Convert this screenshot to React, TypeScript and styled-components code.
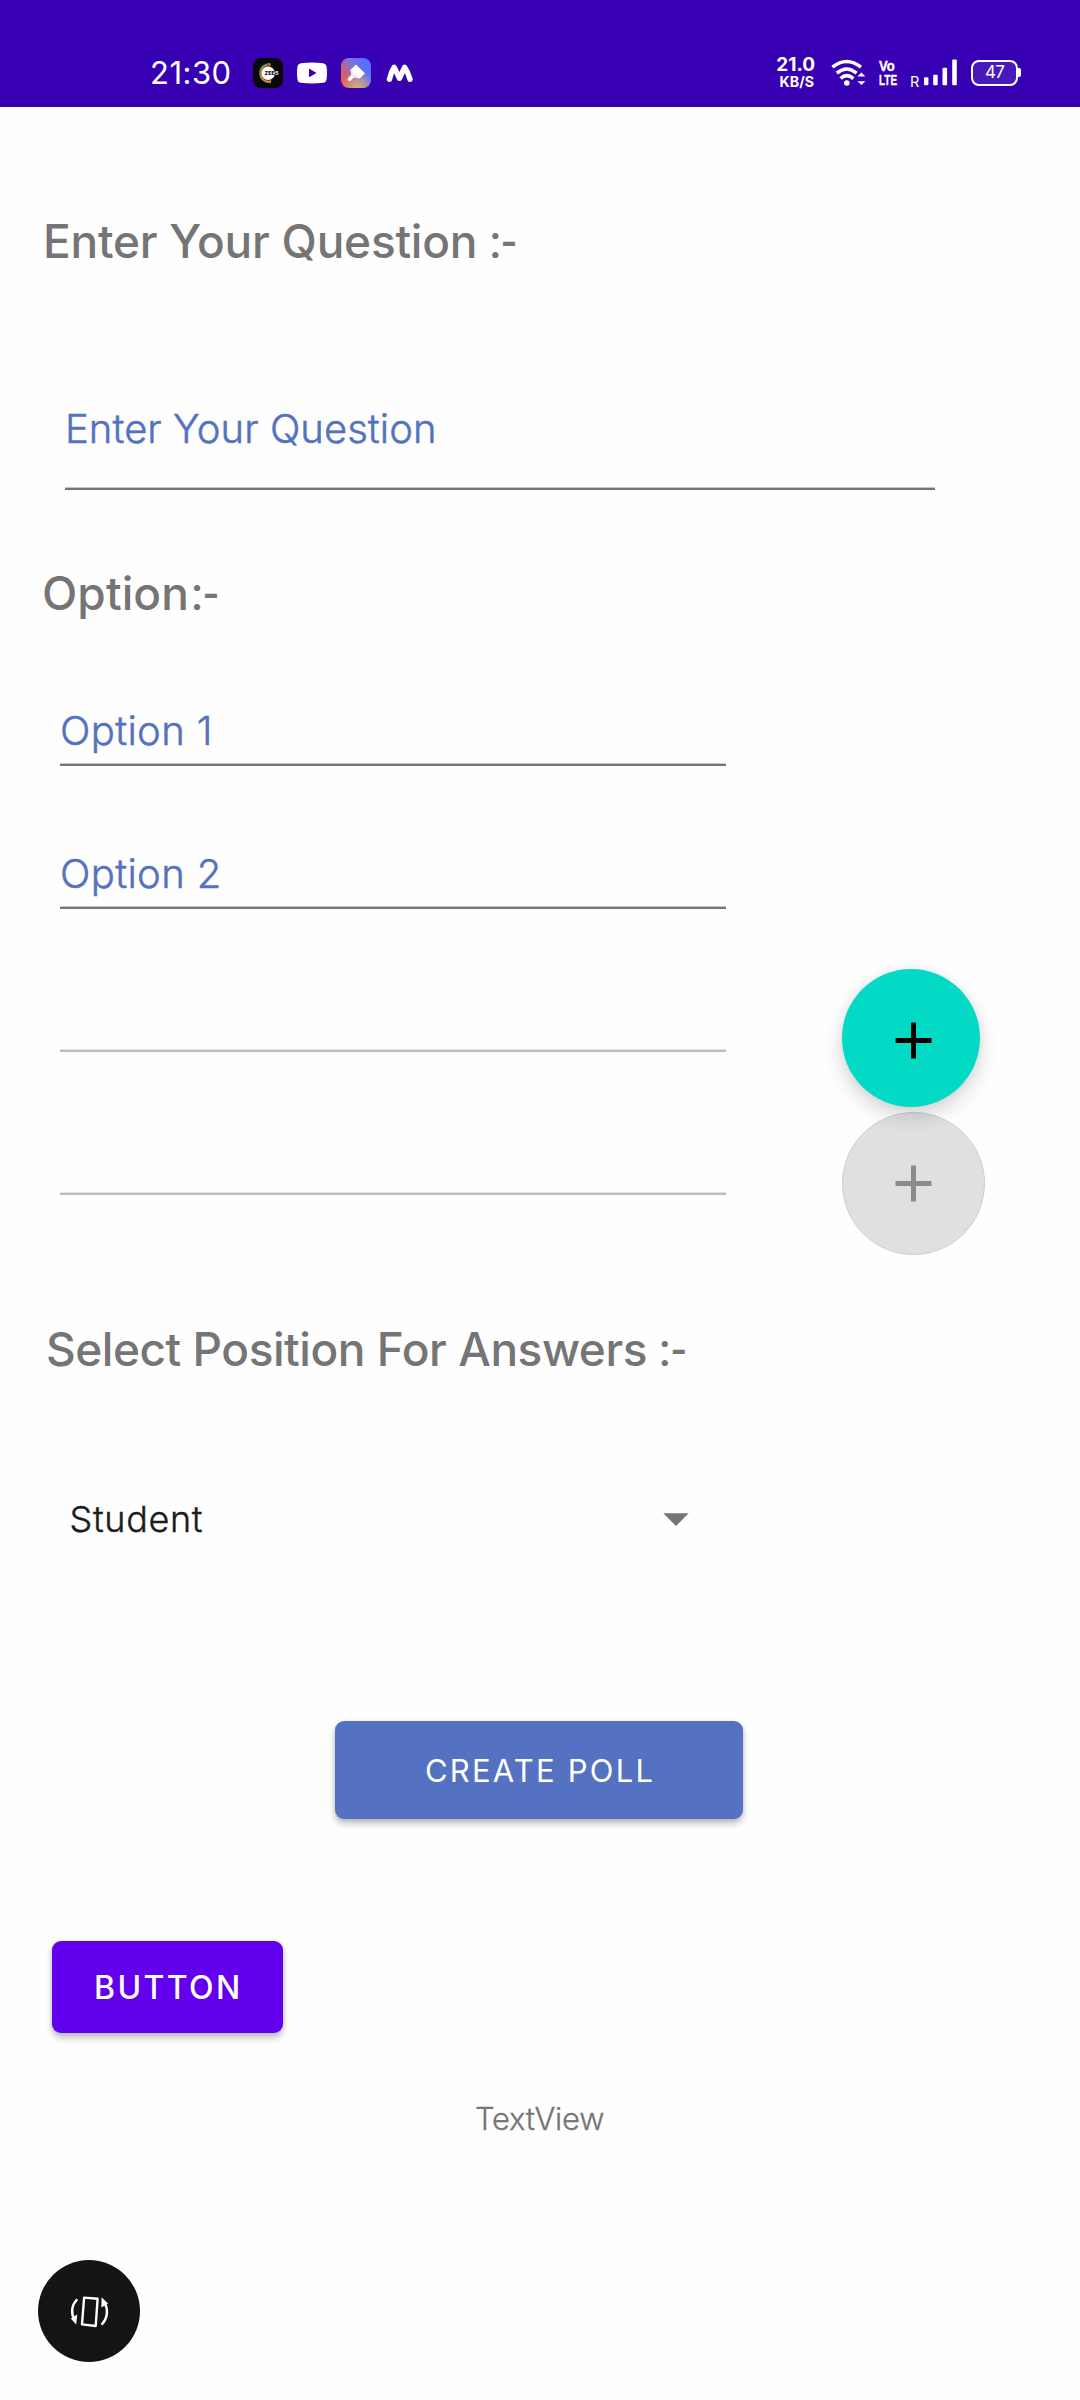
import React from "react";
import styled, { createGlobalStyle } from "styled-components";

const GlobalStyle = createGlobalStyle`
  * { box-sizing: border-box; }
  body {
    margin: 0;
    background: #fefefe;
    font-family: Inter, Roboto, sans-serif;
    font-feature-settings: "calt" 0;
  }
  button, input { font: inherit; border: 0; padding: 0; margin: 0; }
`;

const Screen = styled.main`
  display: flex;
  flex-direction: column;
  align-items: flex-start;
  width: 1080px;
  height: 2400px;
  overflow: hidden;
  background: #fefefe;
`;

/* ---------- status bar ---------- */

const StatusBar = styled.header`
  display: flex;
  align-items: center;
  width: 1080px;
  height: 107px;
  padding: 50px 59px 12px 150px;
  background: #3700b3;
  color: #fff;
`;

const Clock = styled.span`
  width: 103px;
  font-size: 31px;
  font-weight: 400;
  letter-spacing: 0.5px;
  line-height: 45px;
  white-space: nowrap;
`;

const AppIcons = styled.div`
  display: flex;
  align-items: center;
  gap: 14px;
  flex: 1;

  svg { display: block; }
`;

const StatusIcons = styled.div`
  display: flex;
  align-items: center;

  svg { display: block; }
`;

const NetSpeed = styled.div`
  display: flex;
  flex-direction: column;
  align-items: flex-end;
  width: 38px;
  margin-right: 16px;
  font-weight: 650;
  white-space: nowrap;
`;

const SpeedValue = styled.span`
  font-size: 19px;
  line-height: 18px;
`;

const SpeedUnit = styled.span`
  padding-right: 1px;
  font-size: 14.2px;
  line-height: 15px;
`;

const Volte = styled.div`
  display: flex;
  flex-direction: column;
  width: 19px;
  margin: 1px 12px 0 13px;
  font-family: "Liberation Sans", sans-serif;
  font-size: 15.5px;
  font-weight: 700;
`;

const Narrow = styled.span<{ $scale: number }>`
  height: 14px;
  line-height: 14px;
  white-space: nowrap;
  -webkit-text-stroke: 0.4px #fff;
  transform: scaleX(${(p) => p.$scale});
  transform-origin: left;
`;

const Roaming = styled.span`
  width: 14px;
  padding-top: 17px;
  font-size: 14.5px;
  line-height: 17px;
`;

const BatteryBody = styled.div`
  width: 47px;
  height: 26px;
  margin-left: 14px;
  border: 2.4px solid #fff;
  border-radius: 8px;
  background: #4a19bb;
  font-size: 17px;
  font-weight: 400;
  line-height: 21px;
  letter-spacing: -0.7px;
  text-align: center;
`;

const BatteryTip = styled.div`
  width: 3px;
  height: 9px;
  border-radius: 0 2px 2px 0;
  background: #fff;
`;

/* ---------- form ---------- */

const Heading = styled.h2<{ $top: number; $left: number; $height?: number; $track: number }>`
  margin: ${(p) => p.$top}px 0 0 ${(p) => p.$left}px;
  font-size: 46px;
  font-weight: 500;
  letter-spacing: ${(p) => p.$track}px;
  line-height: ${(p) => p.$height ?? 61}px;
  height: ${(p) => p.$height ?? 61}px;
  color: #757575;
  white-space: nowrap;
`;

const HeadingTail = styled.span<{ $gap?: number }>`
  margin-left: ${(p) => p.$gap ?? 0}px;
  font-family: Roboto, sans-serif;
  font-weight: 500;
  letter-spacing: 0;
`;

const Input = styled.input`
  display: block;
  width: 100%;
  height: 61px;
  outline: 0;
  background: transparent;
  font-size: 40px;
  font-weight: 300;
  letter-spacing: 0.06px;
  color: #5472c0;
  -webkit-text-stroke: 0.5px #5472c0;

  &::placeholder { color: #5472c0; opacity: 1; }
`;

const Underline = styled.div<{ $muted?: boolean }>`
  height: 3px;
  background: ${(p) =>
    p.$muted
      ? "linear-gradient(#e2e2e2 1px, #bcbcbc 1px)"
      : "linear-gradient(#c6c6c6 1px, #757575 1px)"};
`;

const QuestionField = styled.div`
  display: flex;
  flex-direction: column;
  justify-content: space-between;
  width: 870px;
  height: 92px;
  margin: 126px 0 0 65px;
`;

const OptionsArea = styled.section`
  display: flex;
  gap: 116px;
  margin-left: 60px;
`;

const OptionList = styled.div`
  width: 666px;
`;

const OptionField = styled.div`
  display: flex;
  flex-direction: column;
  justify-content: flex-end;
  gap: 2px;
  height: 143px;

  ${Input} { letter-spacing: 0.35px; }
`;

const FabColumn = styled.div`
  display: flex;
  flex-direction: column;
  align-items: flex-start;
  gap: 5px;
  padding-top: 346px;
`;

const Fab = styled.button<{ $off?: boolean }>`
  display: flex;
  align-items: center;
  justify-content: center;
  position: relative;
  z-index: ${(p) => (p.$off ? 0 : 1)};
  width: ${(p) => (p.$off ? 143 : 138)}px;
  height: ${(p) => (p.$off ? 143 : 138)}px;
  padding: ${(p) => (p.$off ? 0 : "5px 0 0 5px")};
  border: ${(p) => (p.$off ? "1px solid #cfcfcf" : 0)};
  border-radius: 50%;
  background: ${(p) => (p.$off ? "#e0e0e0" : "#03dac6")};
  color: ${(p) => (p.$off ? "#8b8b8b" : "#000")};
  box-shadow: ${(p) =>
    p.$off ? "none" : "0 9px 20px rgba(0,0,0,.16), 0 0 10px rgba(0,0,0,.05)"};
`;

const Spinner = styled.div`
  display: flex;
  align-items: center;
  justify-content: space-between;
  width: 619px;
  height: 60px;
  margin: 109px 0 0 69.5px;
  font-size: 36px;
  font-weight: 300;
  letter-spacing: 0.65px;
  color: #1c1c1c;
  -webkit-text-stroke: 0.4px #1c1c1c;
`;

const PollButton = styled.button`
  width: 408px;
  height: 98px;
  margin: 172px 0 0 335px;
  padding-left: 90px;
  border-radius: 9px;
  background: #5472c1;
  box-shadow: 0 5px 7px rgba(0, 0, 0, 0.22), 0 1px 4px rgba(0, 0, 0, 0.12);
  color: #fff;
  font-size: 31px;
  font-weight: 400;
  letter-spacing: 2.2px;
  text-align: left;
`;

const PlainButton = styled(PollButton)`
  width: 231px;
  height: 92px;
  margin: 122px 0 0 52px;
  padding-left: 42px;
  background: #6200ee;
  font-size: 32px;
  font-weight: 500;
  letter-spacing: 2.4px;
`;

const Caption = styled.p`
  margin: 60px 0 0 475px;
  font-size: 31px;
  font-weight: 300;
  letter-spacing: -0.25px;
  line-height: 51px;
  color: #757575;
  -webkit-text-stroke: 0.3px #757575;
`;

const RotateButton = styled.button`
  display: block;
  width: 102px;
  height: 102px;
  margin: 116px 0 0 38px;
  border-radius: 50%;
  background: #141414;

  svg { display: block; }
`;

/* ---------- drawings ---------- */

const Zee5Icon = () => (
  <svg width="30" height="30" viewBox="0 0 30 30">
    <rect width="30" height="30" rx="8" fill="#080808" />
    <path d="M17.5 5.6A9.6 9.6 0 1 0 18 24.6" fill="none" stroke="#4c9a5c" strokeWidth="1.2" />
    <path d="M18 7A8.4 8.4 0 1 0 18 23.4" fill="none" stroke="#e8a04c" strokeWidth="1.1" />
    <path d="M17.5 8.2A7.4 7.4 0 1 0 18.5 22.4" fill="none" stroke="#c8402c" strokeWidth="1" />
    <circle cx="15.2" cy="15.2" r="6.7" fill="#fff" />
    <text x="11.5" y="17.2" fontSize="5.4" fontWeight="800" fill="#111">ZEE</text>
    <text x="22" y="17.2" fontSize="5.4" fontWeight="800" fill="#ddd">5</text>
  </svg>
);

const YoutubeIcon = () => (
  <svg width="30" height="22" viewBox="0 0 30 22">
    <path d="M4 1.2Q15 -.2 26 1.2Q29.2 1.6 29.6 5Q30.4 11 29.6 17Q29.2 20.4 26 20.8Q15 22.2 4 20.8Q.8 20.4 .4 17Q-.4 11 .4 5Q.8 1.6 4 1.2Z" fill="#fff" />
    <path d="M12 6.6L19.6 11L12 15.2Z" fill="#3700b3" />
  </svg>
);

const BrushIcon = () => (
  <svg width="30" height="30" viewBox="0 0 30 30">
    <defs>
      <linearGradient id="base" x1="0" y1=".6" x2=".8" y2=".2">
        <stop offset="0" stopColor="#ea5a50" />
        <stop offset=".55" stopColor="#7a74d8" />
        <stop offset="1" stopColor="#5570ff" />
      </linearGradient>
      <radialGradient id="glow" cx=".55" cy="1" r=".6">
        <stop offset="0" stopColor="#dcb070" />
        <stop offset="1" stopColor="#dcb070" stopOpacity="0" />
      </radialGradient>
    </defs>
    <rect width="30" height="30" rx="8" fill="url(#base)" />
    <rect width="30" height="30" rx="8" fill="url(#glow)" />
    <path d="M14.8 7L23.5 15.2L18.3 20.4L9.6 12.2Z" fill="#fff" stroke="#fff" strokeWidth="1" strokeLinejoin="round" />
    <path d="M12.5 17.3L8.6 21.2" stroke="#fff" strokeWidth="3.6" strokeLinecap="round" />
    <path d="M9.6 12.5L10.8 19.3L17.8 20.2Z" fill="#f1edf8" />
  </svg>
);

const HumpsIcon = () => (
  <svg width="28" height="20" viewBox="0 0 28 20">
    <path d="M4.4 16.3Q6 9 9.2 4.4L14.5 15.3L19.6 4.4Q23 9 25 16.3" fill="none" stroke="#fff" strokeWidth="5.4" strokeLinecap="round" strokeLinejoin="round" />
  </svg>
);

const WifiIcon = () => (
  <svg width="35" height="29" viewBox="0 0 35 29">
    <g fill="none" stroke="#fff" strokeWidth="3.5">
      <path d="M1.4 9.2Q15.7 -2.2 30 9.2" />
      <path d="M5.8 15.2Q15.7 6.8 25.6 15.2" />
      <path d="M9.6 20.6Q15.7 14.8 22.4 20.6" />
    </g>
    <circle cx="15.8" cy="25" r="2.8" fill="#fff" />
    <path d="M26.4 18.4L30.4 14.6L34.4 18.4ZM26.4 23.2L30.4 27L34.4 23.2Z" fill="#fff" />
  </svg>
);

const SignalIcon = () => (
  <svg width="33" height="27" viewBox="0 0 33 27">
    <g fill="#fff">
      <rect x="0" y="18.3" width="4.4" height="8" rx="1" />
      <rect x="9.2" y="15.8" width="4.5" height="10.5" rx="1" />
      <rect x="18.5" y="8.8" width="4.6" height="17.5" rx="1" />
      <rect x="28.2" y=".5" width="4.6" height="25.8" rx="1" />
    </g>
  </svg>
);

const PlusIcon = () => (
  <svg width="37" height="37" viewBox="0 0 37 37">
    <path d="M.5 18.5H36.5M18.5 .5V36.5" stroke="currentColor" strokeWidth="5" />
  </svg>
);

const ArrowIcon = () => (
  <svg width="26" height="13" viewBox="0 0 26 13">
    <path d="M.3 .3H25.7L13 13Z" fill="#757575" />
  </svg>
);

const RotateIcon = () => (
  <svg width="102" height="102" viewBox="0 0 102 102">
    <g fill="none" stroke="#fff" strokeWidth="2.4" strokeLinejoin="round">
      <path d="M46.1 37.6L59.6 38.8L57.7 66L44 64.4Z" />
      <path d="M39.2 39.2Q30.5 48.5 36.6 60.5" />
      <path d="M66.6 42.2Q72.6 55 63.6 64.8" />
    </g>
    <path d="M32.8 58.6L39.2 54.6L38.2 64.4Z" fill="#fff" />
    <path d="M63.6 37.2L70 43.6L63.4 47.6Z" fill="#fff" />
  </svg>
);

const options = [
  { hint: "Option 1", enabled: true },
  { hint: "Option 2", enabled: true },
  { hint: "", enabled: false },
  { hint: "", enabled: false },
];

export default function App() {
  return (
    <>
      <GlobalStyle />
      <Screen>
        <StatusBar>
          <Clock>21:30</Clock>
          <AppIcons>
            <Zee5Icon />
            <YoutubeIcon />
            <BrushIcon />
            <HumpsIcon />
          </AppIcons>
          <StatusIcons>
            <NetSpeed>
              <SpeedValue>21.0</SpeedValue>
              <SpeedUnit>KB/S</SpeedUnit>
            </NetSpeed>
            <WifiIcon />
            <Volte>
              <Narrow $scale={0.84}>Vo</Narrow>
              <Narrow $scale={0.64}>LTE</Narrow>
            </Volte>
            <Roaming>R</Roaming>
            <SignalIcon />
            <BatteryBody>47</BatteryBody>
            <BatteryTip />
          </StatusIcons>
        </StatusBar>

        <Heading $top={104} $left={43} $track={-0.24}>
          Enter Your Question <HeadingTail>:-</HeadingTail>
        </Heading>
        <QuestionField>
          <Input placeholder="Enter Your Question" />
          <Underline />
        </QuestionField>

        <Heading $top={74} $left={42} $height={59} $track={0.1}>
          Option<HeadingTail $gap={2}>:-</HeadingTail>
        </Heading>
        <OptionsArea>
          <OptionList>
            {options.map((o, i) => (
              <OptionField key={i}>
                <Input placeholder={o.hint} disabled={!o.enabled} />
                <Underline $muted={!o.enabled} />
              </OptionField>
            ))}
          </OptionList>
          <FabColumn>
            <Fab><PlusIcon /></Fab>
            <Fab $off><PlusIcon /></Fab>
          </FabColumn>
        </OptionsArea>

        <Heading $top={64} $left={46} $track={-0.46}>
          Select Position For Answers <HeadingTail>:-</HeadingTail>
        </Heading>
        <Spinner>
          Student
          <ArrowIcon />
        </Spinner>

        <PollButton>CREATE POLL</PollButton>
        <PlainButton>BUTTON</PlainButton>
        <Caption>TextView</Caption>
        <RotateButton><RotateIcon /></RotateButton>
      </Screen>
    </>
  );
}
